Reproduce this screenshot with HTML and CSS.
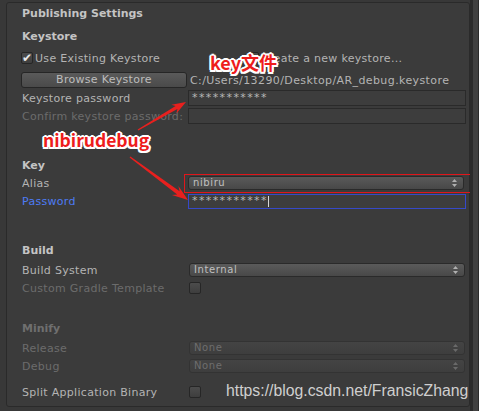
FILE: index.html
```html
<!DOCTYPE html>
<html>
<head>
<meta charset="utf-8">
<link rel="stylesheet" href="styles.css">
</head>
<body>
<div class="main">
  <div class="panel">
    <div class="h1">Publishing Settings</div>
    <div class="h2 h-keystore">Keystore</div>
    <div class="row row-use">
      <span class="toggle1"><span class="check on">✔</span><span class="lbl-check">Use Existing Keystore</span></span>
      <span class="check"></span><span class="lbl-check">Create a new keystore...</span>
    </div>
    <div class="row row-browse">
      <div class="button">Browse Keystore</div>
      <div class="path">C:/Users/13290/Desktop/AR_debug.keystore</div>
    </div>
    <div class="row">
      <div class="lbl">Keystore password</div>
      <div class="field">***********</div>
    </div>
    <div class="row">
      <div class="lbl dim">Confirm keystore password:</div>
      <div class="field"></div>
    </div>

    <div class="h2 h-key">Key</div>
    <div class="row">
      <div class="lbl">Alias</div>
      <div class="popup-wrap red-box"><div class="popup">nibiru<svg class="updown" width="5" height="8" viewBox="0 0 5 8"><path d="M2.5 0 L5 3 L0 3Z M0 5 L5 5 L2.5 8Z"/></svg></div></div>
    </div>
    <div class="row">
      <div class="lbl blue">Password</div>
      <div class="field focus">***********<span class="caret"></span></div>
    </div>

    <div class="h2 h-build">Build</div>
    <div class="row row-after-h">
      <div class="lbl">Build System</div>
      <div class="popup">Internal<svg class="updown" width="5" height="8" viewBox="0 0 5 8"><path d="M2.5 0 L5 3 L0 3Z M0 5 L5 5 L2.5 8Z"/></svg></div>
    </div>
    <div class="row">
      <div class="lbl dim">Custom Gradle Template</div>
      <span class="check"></span>
    </div>

    <div class="h2 dim h-minify">Minify</div>
    <div class="row row-after-h">
      <div class="lbl dim">Release</div>
      <div class="popup disabled">None<svg class="updown" width="5" height="8" viewBox="0 0 5 8"><path d="M2.5 0 L5 3 L0 3Z M0 5 L5 5 L2.5 8Z"/></svg></div>
    </div>
    <div class="row">
      <div class="lbl dim">Debug</div>
      <div class="popup disabled">None<svg class="updown" width="5" height="8" viewBox="0 0 5 8"><path d="M2.5 0 L5 3 L0 3Z M0 5 L5 5 L2.5 8Z"/></svg></div>
    </div>
    <div class="row row-split">
      <div class="lbl">Split Application Binary</div>
      <span class="check"></span>
    </div>
  </div>
</div>
<div class="scrollbar"><div class="thumb"></div></div>

<div class="note note-key">key文件</div>
<div class="note note-nibiru">nibirudebug</div>
<svg class="arrows" width="479" height="411" viewBox="0 0 479 411">
  <polygon points="138.3,130.4 177.4,109.1 176.4,113.4 186,102 171.4,104.7 175.6,105.9 137.7,129.6"/>
  <polygon points="129.6,157.5 177.2,194.45 171.9,194.9 188,200 178.4,186.1 179.6,191.25 130.4,156.5"/>
</svg>
<div class="watermark">https://blog.csdn.net/FransicZhang</div>
</body>
</html>
```
FILE: styles.css
```css
html, body {
  margin: 0;
  padding: 0;
}
body {
  width: 479px;
  height: 411px;
  background: #383838;
  display: flex;
  overflow: hidden;
  font-family: "DejaVu Sans", Verdana, sans-serif;
  font-size: 11px;
  color: #b4b4b4;
}
.main {
  width: 470px;
  padding: 2px 0 4px 6px;
  box-sizing: border-box;
}
.panel {
  height: 405px;
  box-sizing: border-box;
  border: 1px solid #2a2a2a;
  border-radius: 3px;
  background: #3b3b3b;
  padding: 1px 2px 0 15px;
}
.scrollbar {
  width: 9px;
  background: #2c2c2c;
  display: flex;
  padding: 0 1px 0 3px;
  box-sizing: border-box;
}
.thumb {
  flex: 1;
  background: #414141;
}
.h1, .h2 {
  font-weight: bold;
  height: 16px;
  line-height: 16px;
  color: #c4c4c4;
}
.h1 { margin-top: 2px; }
.h-keystore { margin-top: 7px; }
.h-key { margin-top: 33px; }
.h-build { margin-top: 33px; }
.h-minify { margin-top: 24px; }
.h2.dim { color: #6f6f6f; }

.row {
  height: 18px;
  display: flex;
  align-items: center;
  letter-spacing: 0.3px;
}
.row-use { margin-top: 4px; }
.row-browse { margin-top: 4px; }
.row-after-h { margin-top: 2px; }
.row-split { margin-top: 8px; }
.toggle1 {
  width: 225px;
  flex: none;
  display: flex;
  align-items: center;
  margin-left: -1px;
}
.lbl {
  width: 166px;
  flex: none;
  white-space: nowrap;
  overflow: hidden;
}
.dim { color: #6c6c6c; }
.blue { color: #4d7cf5; }
.lbl-check {
  margin-left: 2px;
  white-space: nowrap;
}
.check {
  width: 12px;
  height: 12px;
  box-sizing: border-box;
  border: 1px solid #262626;
  border-radius: 2px;
  background: linear-gradient(#4c4c4c, #3e3e3e);
  flex: none;
  margin-left: 1px;
  display: inline-flex;
  align-items: center;
  justify-content: center;
  font-size: 12px;
  color: #e8e8e8;
  line-height: 12px;
  letter-spacing: 0;
}
.check.on {
  margin-left: 0;
}
.button {
  width: 166px;
  height: 16px;
  box-sizing: border-box;
  border: 1px solid #262626;
  border-radius: 3px;
  background: linear-gradient(#5a5a5a, #4a4a4a);
  text-align: center;
  line-height: 14px;
  color: #bdbdbd;
  margin-left: -1px;
  flex: none;
}
.path {
  margin-left: 3px;
  white-space: nowrap;
  color: #b4b4b4;
  letter-spacing: 0.4px;
}
.field {
  width: 278px;
  height: 16px;
  box-sizing: border-box;
  border: 1px solid #2a2a2a;
  background: #3d3d3d;
  padding-left: 3px;
  line-height: 14px;
  color: #b8b8b8;
  white-space: nowrap;
  display: flex;
  align-items: center;
  letter-spacing: 1.4px;
}
.field.focus {
  border: 1px solid #3649c9;
  height: 15px;
}
.caret {
  display: inline-block;
  width: 1px;
  height: 11px;
  background: #d8d8d8;
  margin-left: 0;
}
.popup {
  width: 276px;
  height: 14px;
  box-sizing: border-box;
  margin-left: 1px;
  border: 1px solid #2a2a2a;
  border-radius: 3px;
  background: linear-gradient(#5a5a5a, #484848);
  font-size: 10px;
  line-height: 12px;
  padding-left: 4px;
  color: #c0c0c0;
  display: flex;
  align-items: center;
  justify-content: space-between;
  padding-right: 6px;
  letter-spacing: 0.6px;
}
.popup .updown { fill: #b0b0b0; }
.popup.disabled {
  background: linear-gradient(#444444, #3e3e3e);
  border-color: #333333;
  color: #6e6e6e;
}
.popup.disabled .updown { fill: #6a6a6a; }
.popup-wrap {
  display: flex;
}
.red-box {
  margin-left: -4px;
  padding: 2px 7px 2px 3px;
  border: 1px solid #e0161b;
  width: 288px;
  box-sizing: border-box;
  height: 19px;
  align-items: center;
}
.red-box .popup { margin-left: 0; }

.note {
  position: absolute;
  font-family: "Noto Sans CJK SC", "DejaVu Sans", sans-serif;
  font-weight: bold;
  color: #ee1c1c;
  white-space: nowrap;
  text-shadow:
    -2px 0 0 #fff, 2px 0 0 #fff, 0 -2px 0 #fff, 0 2px 0 #fff,
    -1.5px -1.5px 0 #fff, 1.5px -1.5px 0 #fff, -1.5px 1.5px 0 #fff, 1.5px 1.5px 0 #fff;
}
.note-key {
  left: 210px;
  top: 50px;
  font-size: 18px;
  line-height: 25px;
}
.note-nibiru {
  left: 43px;
  top: 128px;
  font-size: 17.5px;
  line-height: 24px;
}
.arrows {
  position: absolute;
  left: 0;
  top: 0;
  fill: #e8201e;
}
.watermark {
  position: absolute;
  left: 226px;
  top: 380px;
  font-family: "Liberation Sans", Arial, sans-serif;
  font-size: 15.8px;
  line-height: 22px;
  color: #cfcfcf;
  white-space: nowrap;
}
```
